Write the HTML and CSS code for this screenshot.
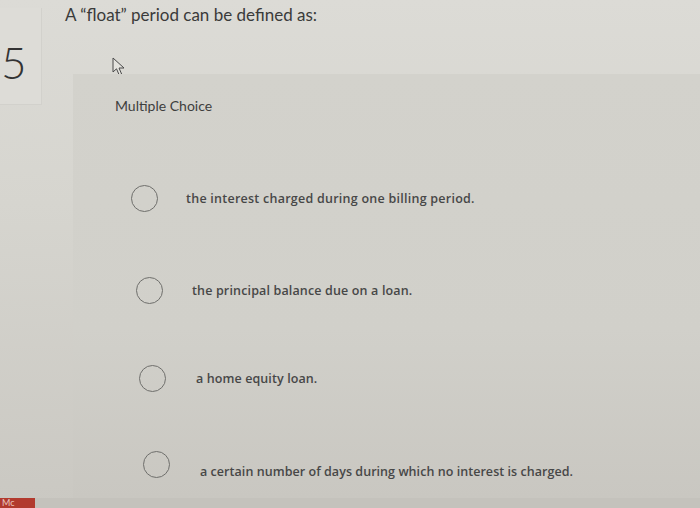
FILE: index.html
```html
<!DOCTYPE html>
<html>
<head>
<meta charset="utf-8">
<link rel="stylesheet" href="styles.css">
</head>
<body>
<div class="page">
  <div class="side">
    <div class="numbox"><span class="num">5</span></div>
  </div>
  <div class="main">
    <div class="question">A “float” period can be defined as:</div>
    <div class="cursor-row">
      <svg class="cursor" width="14" height="20" viewBox="0 0 14 20">
        <path d="M1 1 L1 15 L4.5 11.8 L7.2 18 L9.6 17 L7 11 L12 11 Z" fill="#e4e3de" stroke="#4a4a4a" stroke-width="1" stroke-linejoin="round"/>
      </svg>
    </div>
    <div class="panel">
      <div class="mc-label">Multiple Choice</div>
      <div class="option opt-1"><span class="radio"></span><span class="opt-text">the interest charged during one billing period.</span></div>
      <div class="option opt-2"><span class="radio"></span><span class="opt-text">the principal balance due on a loan.</span></div>
      <div class="option opt-3"><span class="radio"></span><span class="opt-text">a home equity loan.</span></div>
      <div class="option opt-4"><span class="radio"></span><span class="opt-text">a certain number of days during which no interest is charged.</span></div>
    </div>
  </div>
</div>
<div class="footer"><span class="badge">Mc</span></div>
</body>
</html>
```

FILE: styles.css
```css
html, body {
  margin: 0;
  padding: 0;
}
body {
  width: 700px;
  height: 508px;
  overflow: hidden;
  font-family: Lato, "Open Sans", sans-serif;
  color: #3a3a3a;
  background: linear-gradient(to bottom, #dcdbd6 0%, #d6d5cf 40%, #cac8c2 100%);
  display: flex;
  flex-direction: column;
}
.page {
  display: flex;
  flex: 1;
}
.side {
  width: 42px;
  flex: none;
}
.numbox {
  margin-top: 8px;
  height: 97px;
  background: #dddcd7;
  border-right: 1px solid #d2d1cc;
  border-bottom: 1px solid #d2d1cc;
  box-sizing: border-box;
  padding-top: 32px;
  padding-left: 1px;
}
.num {
  font-size: 44px;
  font-weight: 300;
  line-height: 44px;
  color: #333333;
}
.main {
  flex: 1;
  display: flex;
  flex-direction: column;
}
.question {
  padding-left: 23px;
  padding-top: 5px;
  font-size: 17px;
  line-height: 20px;
  height: 20px;
  color: #3a3a3a;
}
.cursor-row {
  height: 49px;
  padding-left: 70px;
  box-sizing: border-box;
  padding-top: 32px;
}
.cursor {
  display: block;
}
.panel {
  margin-left: 31px;
  flex: 1;
  background: linear-gradient(to bottom, #d3d2cc 0%, #d1d0ca 60%, #c9c7c1 100%);
  padding-top: 24px;
  box-sizing: border-box;
}
.mc-label {
  padding-left: 42px;
  font-size: 14px;
  line-height: 16px;
  color: #3e3e3e;
}
.option {
  display: flex;
  align-items: center;
  height: 40px;
}
.radio {
  width: 25px;
  height: 25px;
  border: 1.5px solid #6f6f6c;
  border-radius: 50%;
  flex: none;
}
.opt-text {
  font-family: "Open Sans", Lato, sans-serif;
  font-size: 12.5px;
  font-weight: 600;
  letter-spacing: 0.25px;
  color: #474747;
}
.opt-1 { margin-top: 64px; padding-left: 58px; }
.opt-1 .opt-text { margin-left: 28px; }
.opt-2 { margin-top: 52px; padding-left: 63px; }
.opt-2 .opt-text { margin-left: 29px; letter-spacing: 0.15px; }
.opt-3 { margin-top: 48px; padding-left: 66px; }
.opt-3 .opt-text { margin-left: 30px; letter-spacing: 0.1px; }
.opt-4 { margin-top: 46px; padding-left: 70px; }
.opt-4 .opt-text { margin-left: 30px; padding-top: 14px; letter-spacing: 0.05px; }
.footer {
  height: 10px;
  flex: none;
  background: #c4c2bc;
  overflow: hidden;
}
.badge {
  display: inline-block;
  width: 35px;
  height: 10px;
  background: #b23a2e;
  color: #e8c8c0;
  font-size: 9px;
  line-height: 10px;
  padding-left: 2px;
  box-sizing: border-box;
    vertical-align: top;
}
```
